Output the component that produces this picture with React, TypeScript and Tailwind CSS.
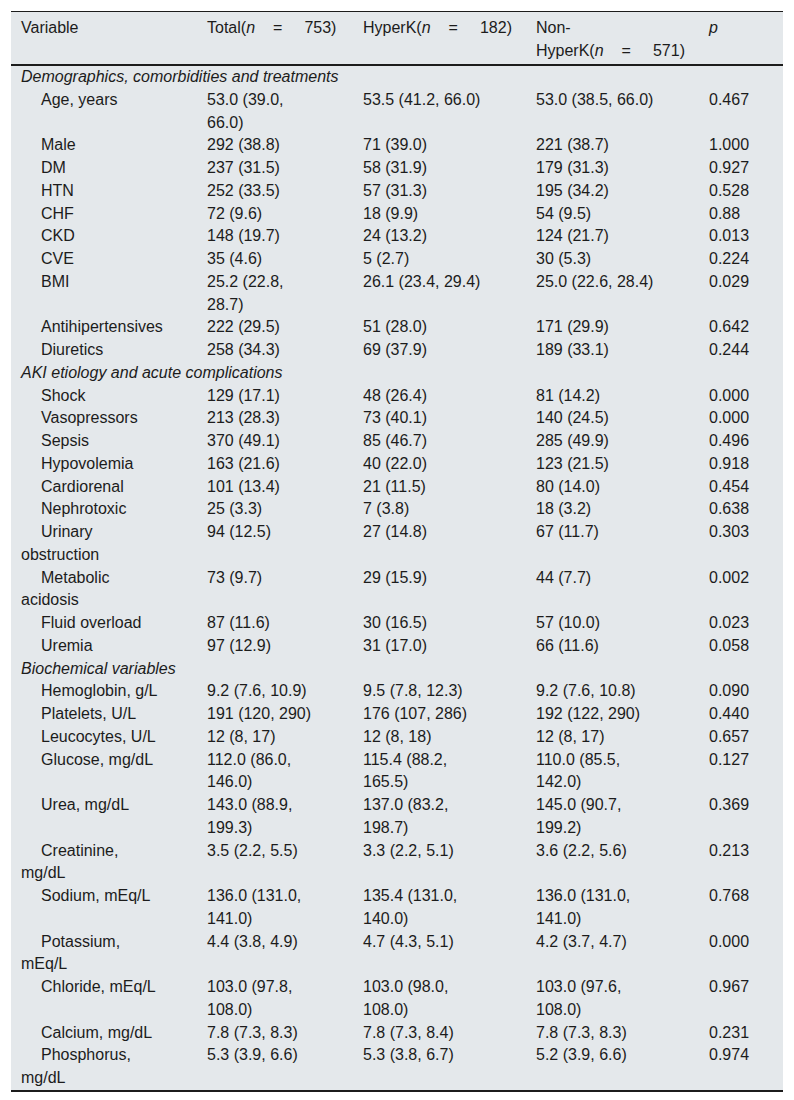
import React from 'react'

type Row =
  | { section: string }
  | { label: string; total: string; hyper: string; non: string; p: string }

const rows: Row[] = [
  { section: 'Demographics, comorbidities and treatments' },
  { label: 'Age, years', total: '53.0 (39.0, 66.0)', hyper: '53.5 (41.2, 66.0)', non: '53.0 (38.5, 66.0)', p: '0.467' },
  { label: 'Male', total: '292 (38.8)', hyper: '71 (39.0)', non: '221 (38.7)', p: '1.000' },
  { label: 'DM', total: '237 (31.5)', hyper: '58 (31.9)', non: '179 (31.3)', p: '0.927' },
  { label: 'HTN', total: '252 (33.5)', hyper: '57 (31.3)', non: '195 (34.2)', p: '0.528' },
  { label: 'CHF', total: '72 (9.6)', hyper: '18 (9.9)', non: '54 (9.5)', p: '0.88' },
  { label: 'CKD', total: '148 (19.7)', hyper: '24 (13.2)', non: '124 (21.7)', p: '0.013' },
  { label: 'CVE', total: '35 (4.6)', hyper: '5 (2.7)', non: '30 (5.3)', p: '0.224' },
  { label: 'BMI', total: '25.2 (22.8, 28.7)', hyper: '26.1 (23.4, 29.4)', non: '25.0 (22.6, 28.4)', p: '0.029' },
  { label: 'Antihipertensives', total: '222 (29.5)', hyper: '51 (28.0)', non: '171 (29.9)', p: '0.642' },
  { label: 'Diuretics', total: '258 (34.3)', hyper: '69 (37.9)', non: '189 (33.1)', p: '0.244' },
  { section: 'AKI etiology and acute complications' },
  { label: 'Shock', total: '129 (17.1)', hyper: '48 (26.4)', non: '81 (14.2)', p: '0.000' },
  { label: 'Vasopressors', total: '213 (28.3)', hyper: '73 (40.1)', non: '140 (24.5)', p: '0.000' },
  { label: 'Sepsis', total: '370 (49.1)', hyper: '85 (46.7)', non: '285 (49.9)', p: '0.496' },
  { label: 'Hypovolemia', total: '163 (21.6)', hyper: '40 (22.0)', non: '123 (21.5)', p: '0.918' },
  { label: 'Cardiorenal', total: '101 (13.4)', hyper: '21 (11.5)', non: '80 (14.0)', p: '0.454' },
  { label: 'Nephrotoxic', total: '25 (3.3)', hyper: '7 (3.8)', non: '18 (3.2)', p: '0.638' },
  { label: 'Urinary obstruction', total: '94 (12.5)', hyper: '27 (14.8)', non: '67 (11.7)', p: '0.303' },
  { label: 'Metabolic acidosis', total: '73 (9.7)', hyper: '29 (15.9)', non: '44 (7.7)', p: '0.002' },
  { label: 'Fluid overload', total: '87 (11.6)', hyper: '30 (16.5)', non: '57 (10.0)', p: '0.023' },
  { label: 'Uremia', total: '97 (12.9)', hyper: '31 (17.0)', non: '66 (11.6)', p: '0.058' },
  { section: 'Biochemical variables' },
  { label: 'Hemoglobin, g/L', total: '9.2 (7.6, 10.9)', hyper: '9.5 (7.8, 12.3)', non: '9.2 (7.6, 10.8)', p: '0.090' },
  { label: 'Platelets, U/L', total: '191 (120, 290)', hyper: '176 (107, 286)', non: '192 (122, 290)', p: '0.440' },
  { label: 'Leucocytes, U/L', total: '12 (8, 17)', hyper: '12 (8, 18)', non: '12 (8, 17)', p: '0.657' },
  { label: 'Glucose, mg/dL', total: '112.0 (86.0, 146.0)', hyper: '115.4 (88.2, 165.5)', non: '110.0 (85.5, 142.0)', p: '0.127' },
  { label: 'Urea, mg/dL', total: '143.0 (88.9, 199.3)', hyper: '137.0 (83.2, 198.7)', non: '145.0 (90.7, 199.2)', p: '0.369' },
  { label: 'Creatinine, mg/dL', total: '3.5 (2.2, 5.5)', hyper: '3.3 (2.2, 5.1)', non: '3.6 (2.2, 5.6)', p: '0.213' },
  { label: 'Sodium, mEq/L', total: '136.0 (131.0, 141.0)', hyper: '135.4 (131.0, 140.0)', non: '136.0 (131.0, 141.0)', p: '0.768' },
  { label: 'Potassium, mEq/L', total: '4.4 (3.8, 4.9)', hyper: '4.7 (4.3, 5.1)', non: '4.2 (3.7, 4.7)', p: '0.000' },
  { label: 'Chloride, mEq/L', total: '103.0 (97.8, 108.0)', hyper: '103.0 (98.0, 108.0)', non: '103.0 (97.6, 108.0)', p: '0.967' },
  { label: 'Calcium, mg/dL', total: '7.8 (7.3, 8.3)', hyper: '7.8 (7.3, 8.4)', non: '7.8 (7.3, 8.3)', p: '0.231' },
  { label: 'Phosphorus, mg/dL', total: '5.3 (3.9, 6.6)', hyper: '5.3 (3.8, 6.7)', non: '5.2 (3.9, 6.6)', p: '0.974' },
]

// "(n = 753)" with the wide spacing round the equals sign
function N({ value }: { value: string }) {
  return (
    <span className="whitespace-nowrap">
      (<i>n</i>
      <span className="inline-block w-[18px]" />=
      <span className="inline-block w-[22px]" />
      {value})
    </span>
  )
}

const cell = 'pl-[10px] pr-[32px] align-top text-left font-normal'

export default function App() {
  return (
    <div className="min-h-screen bg-white pt-[11px] px-[11px] text-[16px] text-[#1c1c1c] font-['Liberation_Sans',Arial,sans-serif]">
      <table className="w-[772px] table-fixed border-collapse bg-[#e4e8eb]">
        <colgroup>
          <col className="w-[186px]" />
          <col className="w-[156px]" />
          <col className="w-[173px]" />
          <col className="w-[173px]" />
          <col className="w-[84px]" />
        </colgroup>
        <thead>
          <tr className="border-t border-[#1c1c1c] border-b-2 leading-[23px]">
            <th className={`${cell} pt-[4px] pb-[2px]`}>Variable</th>
            <th className={`${cell} pt-[4px] pb-[2px] whitespace-nowrap`}>
              Total<N value="753" />
            </th>
            <th className={`${cell} pt-[4px] pb-[2px] whitespace-nowrap`}>
              HyperK<N value="182" />
            </th>
            <th className={`${cell} pt-[4px] pb-[2px]`}>
              Non-
              <br />
              <span className="whitespace-nowrap">
                HyperK<N value="571" />
              </span>
            </th>
            <th className={`${cell} pt-[4px] pb-[2px]`}>
              <i>p</i>
            </th>
          </tr>
        </thead>
        <tbody className="leading-[22.75px] border-b-2 border-[#1c1c1c]">
          {rows.map((r, i) =>
            'section' in r ? (
              <tr key={i}>
                <td colSpan={5} className="pl-[10px] italic">
                  {r.section}
                </td>
              </tr>
            ) : (
              <tr key={i}>
                <td className={`${cell} indent-[20px]`}>{r.label}</td>
                <td className={cell}>{r.total}</td>
                <td className={cell}>{r.hyper}</td>
                <td className={cell}>{r.non}</td>
                <td className="pl-[10px] align-top">{r.p}</td>
              </tr>
            ),
          )}
        </tbody>
      </table>
    </div>
  )
}
